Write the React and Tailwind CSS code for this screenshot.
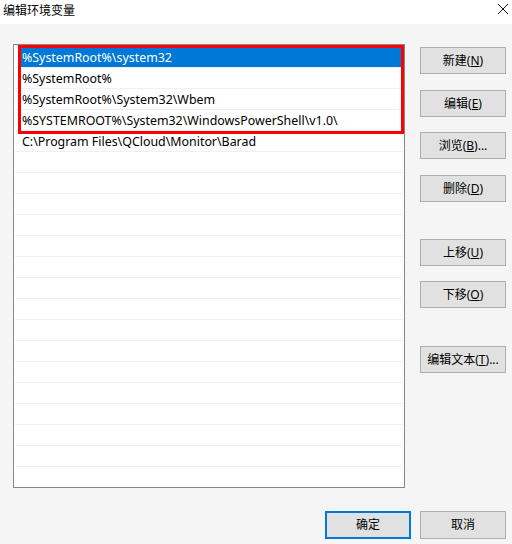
import React from "react";

const font = { fontFamily: '"Noto Sans", "Noto Sans CJK SC", sans-serif' };

const paths = [
  "%SystemRoot%\\system32",
  "%SystemRoot%",
  "%SystemRoot%\\System32\\Wbem",
  "%SYSTEMROOT%\\System32\\WindowsPowerShell\\v1.0\\",
  "C:\\Program Files\\QCloud\\Monitor\\Barad",
];

const Btn = ({ label, hot, tail = "", className = "" }) => (
  <button
    className={
      "w-[86px] h-[27px] bg-[#e1e1e1] border border-[#adadad] text-[12px] text-black flex items-center justify-center " +
      className
    }
  >
    {label}(<span className="underline">{hot}</span>){tail}
  </button>
);

export default function App() {
  const rows = [];
  for (let i = 0; i < 21; i++) rows.push(paths[i] || "");

  return (
    <div
      className="w-[512px] h-[544px] bg-[#f5f5f5] flex flex-col overflow-hidden text-black"
      style={font}
    >
      <div className="h-6 bg-white flex items-center justify-between pl-[3px] pr-[2px]">
        <span className="text-[12px] leading-none -mt-[3px]">编辑环境变量</span>
        <svg width="12" height="12" viewBox="0 0 12 12" className="mr-[1px] -mt-[6px]">
          <path d="M1 1 L11 11 M11 1 L1 11" stroke="#111" strokeWidth="1" />
        </svg>
      </div>

      <div className="flex pl-[13px] pt-5">
        <div className="relative w-[392px] h-[444px] bg-white border border-[#828790] pt-[2px] px-px overflow-hidden">
          {rows.map((t, i) => (
            <div
              key={i}
              className="h-[21px] border-b border-[#f0f0f0] flex items-center text-[12.4px] whitespace-nowrap"
            >
              {i === 0 ? (
                <div className="h-[20px] w-full ml-[4px] mr-[1px] bg-[#0078d7] text-white flex items-center pl-[3px] pt-[2px]">
                  {t}
                </div>
              ) : (
                <span className="pl-[7px] pt-[2px]">{t}</span>
              )}
            </div>
          ))}
          <div className="absolute left-[4px] top-[0px] w-[386px] h-[89px] border-[3px] border-[#ff0000]" />
        </div>

        <div className="ml-[15px] pt-[3px] flex flex-col">
          <Btn label="新建" hot="N" />
          <Btn label="编辑" hot="E" className="mt-[16px]" />
          <Btn label="浏览" hot="B" tail="..." className="mt-[15px]" />
          <Btn label="删除" hot="D" className="mt-[16px]" />
          <Btn label="上移" hot="U" className="mt-[37px]" />
          <Btn label="下移" hot="O" className="mt-[15px]" />
          <Btn label="编辑文本" hot="T" tail="..." className="mt-[38px]" />
        </div>
      </div>

      <div className="flex justify-end gap-[9px] pr-[6px] mt-[23px]">
        <button className="w-[86px] h-[28px] bg-[#e1e1e1] border-2 border-[#0078d7] text-[12px]">
          确定
        </button>
        <button className="w-[86px] h-[28px] bg-[#e1e1e1] border border-[#adadad] text-[12px]">
          取消
        </button>
      </div>
    </div>
  );
}
